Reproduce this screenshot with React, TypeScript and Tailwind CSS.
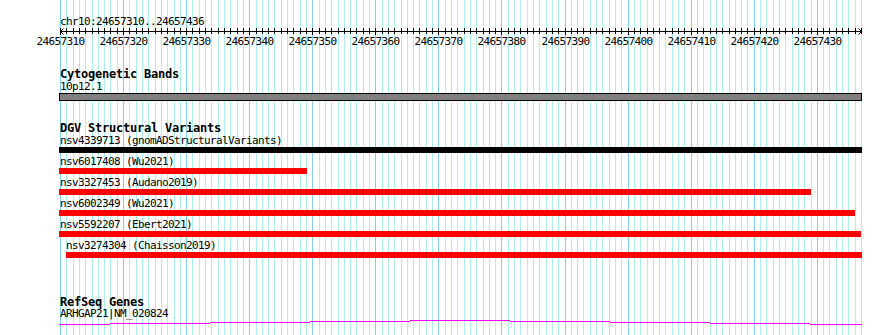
import React from "react"

const START = 24657310
const END = 24657436
const X0 = 60
const BP = 6.307

const gx = (i: number) => Math.round(X0 + i * BP)

const variants = [
    { id: "nsv4339713", source: "gnomADStructuralVariants", from: 59, to: 862, color: "#000000", labelX: 60 },
    { id: "nsv6017408", source: "Wu2021", from: 59, to: 307, color: "#ff0000", labelX: 60 },
    { id: "nsv3327453", source: "Audano2019", from: 59, to: 811, color: "#ff0000", labelX: 60 },
    { id: "nsv6002349", source: "Wu2021", from: 59, to: 855, color: "#ff0000", labelX: 60 },
    { id: "nsv5592207", source: "Ebert2021", from: 59, to: 861, color: "#ff0000", labelX: 60 },
    { id: "nsv3274304", source: "Chaisson2019", from: 66, to: 862, color: "#ff0000", labelX: 66 },
]

// stepped transcript line: [x1, x2, y]
const geneSteps: [number, number, number][] = [
    [59, 110, 6], [110, 210, 5], [210, 310, 4], [310, 410, 3], [410, 510, 2],
    [510, 610, 3], [610, 710, 4], [710, 810, 5], [810, 862, 6],
]

const Grid = () => {
    const lines = Array.from({ length: END - START + 2 }, (_, i) => i)
    return (
        <svg className="absolute inset-0" width={890} height={335} shapeRendering="crispEdges">
            {lines.map(i => (
                <rect key={i} x={gx(i)} y={0} width={1} height={335} fill={i % 10 === 0 ? "#87ceeb" : "#afeeee"} />
            ))}
        </svg>
    )
}

const Ruler = () => {
    const ticks = Array.from({ length: END - START + 2 }, (_, i) => i)
    const last = gx(END - START + 1)
    return (
        <svg className="block" width={890} height={50} shapeRendering="crispEdges">
            <text x={60} y={25} fontFamily="DejaVu Sans Mono, monospace" fontSize={11} letterSpacing={-0.62} fill="#000">
                chr10:{START}..{END}
            </text>
            <rect x={60} y={31} width={last - 60 + 1} height={1} fill="#000" />
            {ticks.map(i => (
                <rect key={i} x={gx(i)} y={28} width={1} height={i % 10 === 0 ? 7 : 6} fill="#000" />
            ))}
            <path d="M60.5 31.5 L63.5 28.5 M60.5 31.5 L63.5 34.5" stroke="#000" strokeWidth={1} fill="none" shapeRendering="auto" />
            <path d={`M${last + 0.5} 31.5 L${last - 2.5} 28.5 M${last + 0.5} 31.5 L${last - 2.5} 34.5`} stroke="#000" strokeWidth={1} fill="none" shapeRendering="auto" />
            {ticks.filter(i => i % 10 === 0 && i < 127).map(i => (
                <text key={i} x={gx(i) + 0.5} y={45} textAnchor="middle" fontFamily="DejaVu Sans Mono, monospace" fontSize={11} letterSpacing={-0.62} fill="#000">
                    {START + i}
                </text>
            ))}
        </svg>
    )
}

const TrackTitle = ({ children }: { children: React.ReactNode }) => (
    <h2 className="pl-[60px] h-[12px] leading-[12px] text-[12px] tracking-[-0.22px] font-bold text-black whitespace-nowrap">{children}</h2>
)

const Label = ({ children, x = 60, className = "" }: { children: React.ReactNode; x?: number; className?: string }) => (
    <p className={`h-[10px] leading-[10px] text-[11px] tracking-[-0.62px] whitespace-nowrap ${className}`} style={{ paddingLeft: x }}>
        {children}
    </p>
)

export default function App() {
    return (
        <div className="relative w-[890px] h-[335px] overflow-hidden bg-white font-['DejaVu_Sans_Mono',monospace] text-black">
            <Grid />
            <div className="relative">
                <Ruler />

                <section className="mt-[18px]">
                    <TrackTitle>Cytogenetic Bands</TrackTitle>
                    <Label className="mt-[2px]">10p12.1</Label>
                    <div className="mt-[1px] ml-[59px] w-[803px] h-[8px] border border-black bg-[#808080]" />
                </section>

                <section className="mt-[21px]">
                    <TrackTitle>DGV Structural Variants</TrackTitle>
                    {variants.map((v, i) => (
                        <div key={v.id} className={i === 0 ? "mt-[2px]" : "mt-[4px]"}>
                            <Label x={v.labelX}>{v.id} ({v.source})</Label>
                            <div className="mt-[1px] h-[6px]" style={{ marginLeft: v.from, width: v.to - v.from, backgroundColor: v.color }} />
                        </div>
                    ))}
                </section>

                <section className="mt-[38px]">
                    <TrackTitle>RefSeq Genes</TrackTitle>
                    <Label className="mt-[1px]">ARHGAP21|NM_020824</Label>
                    <svg className="block -mt-px" width={890} height={8} shapeRendering="crispEdges">
                        {geneSteps.map(([a, b, y]) => (
                            <rect key={a} x={a} y={y} width={b - a} height={1} fill="#ff00ff" />
                        ))}
                    </svg>
                </section>
            </div>
        </div>
    )
}
